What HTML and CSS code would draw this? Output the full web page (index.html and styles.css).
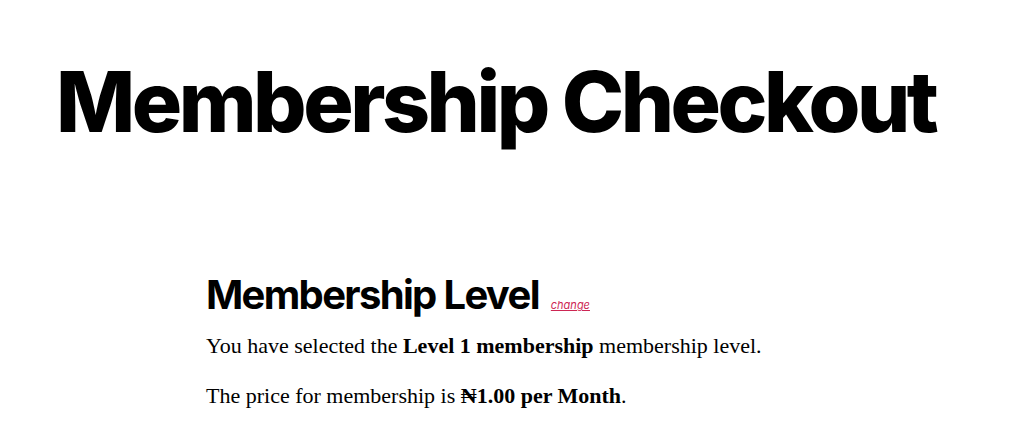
FILE: index.html
```html
<!DOCTYPE html>
<html lang="en">
<head>
<meta charset="utf-8">
<title>Membership Checkout</title>
<link rel="stylesheet" href="styles.css">
</head>
<body>
<header class="entry-header">
  <h1 class="entry-title">Membership Checkout</h1>
</header>
<main class="entry-content">
  <div class="level-head">
    <h2 class="level-title">Membership Level</h2>
    <a class="change-link" href="#">change</a>
  </div>
  <p class="level-text">You have selected the <strong>Level 1 membership</strong> membership level.</p>
  <p class="level-text">The price for membership is <strong>₦1.00 per Month</strong>.</p>
</main>
</body>
</html>
```

FILE: styles.css
```css
html, body {
  margin: 0;
  padding: 0;
  background: #fff;
  color: #000;
}

.entry-header {
  padding: 56px 0 0 56px;
}

.entry-title {
  margin: 0;
  font-family: Inter, "Liberation Sans", sans-serif;
  font-weight: 800;
  font-size: 84px;
  line-height: 1.1;
  letter-spacing: -0.0415625em;
}

.entry-content {
  padding: 123px 0 0 206px;
}

.level-head {
  display: flex;
  align-items: baseline;
  gap: 12px;
}

.level-title {
  margin: 0;
  font-family: Inter, "Liberation Sans", sans-serif;
  font-weight: 700;
  font-size: 40px;
  line-height: 1.2;
  letter-spacing: -0.0415625em;
}

.change-link {
  font-family: Inter, "Liberation Sans", sans-serif;
  font-style: italic;
  font-size: 11px;
  color: #cd2653;
}

.level-text {
  margin: 10px 0 0;
  font-family: "Liberation Serif", serif;
  font-size: 22px;
  line-height: 1.5;
}

.level-text + .level-text {
  margin-top: 17px;
}
```
